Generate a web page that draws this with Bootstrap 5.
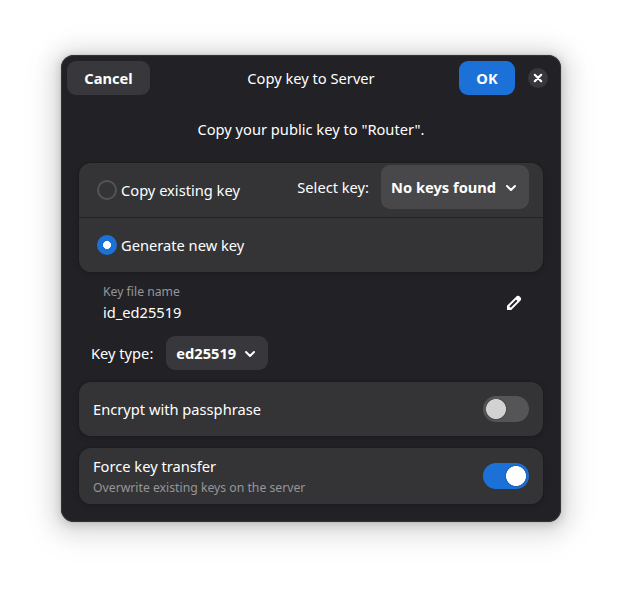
<!DOCTYPE html>
<html lang="en">
<head>
<meta charset="utf-8">
<meta name="viewport" content="width=device-width, initial-scale=1">
<title>Copy key to Server</title>
<link rel="stylesheet" href="https://cdn.jsdelivr.net/npm/bootstrap@5.3.0/dist/css/bootstrap.min.css">
<style>
body { font-family: "Noto Sans", sans-serif; font-size: 14.667px; line-height: 20px; color: #fff; background: #fff; height: 589px; overflow: hidden; padding: 55px 61px 0; }
.dialog { width: 500px; height: 467px; background: #222226; border-radius: 13px; box-shadow: inset 0 0 0 1px #333337, 0 0 0 1px rgba(0,0,0,.05), 0 2px 8px 2px rgba(0,0,0,.13), 0 3px 20px 10px rgba(0,0,0,.09), 0 6px 32px 16px rgba(0,0,0,.04); }
.titlebar { height: 47px; padding: 6px 13px 7px 6px; display: grid; grid-template-columns: 1fr auto 1fr; align-items: center; }
.heading { padding-left: 7px; }
.flat { border: 0; border-radius: 9px; color: #fff; font-weight: 700; font-size: 14.667px; line-height: 20px; padding: 0 10px; height: 34px; background: #38383c; }
.flat:hover { color: #fff; background: #424246; }
.flat svg { margin-top: 1px; }
.cancel { width: 83px; }
.ok, .ok:hover { width: 56px; background: #1c71d8; }
.closer { width: 20px; height: 20px; background: #38383c; margin-left: 13px; }
.content { padding: 17px 18px 0; }
.intro { height: 44px; }
.panel { background: #343436; border-radius: 12px; box-shadow: 0 0 0 1px rgba(0,0,6,.04), 0 1px 3px 1px rgba(0,0,6,.09), 0 2px 6px 2px rgba(0,0,6,.03); }
.line { height: 54px; padding: 0 14px; }
.choice { padding-left: 18px; }
.choice + .choice { border-top: 1px solid #222226; height: 55px; }
.dot.form-check-input { width: 20px; height: 20px; margin: 0; background-color: transparent; border: 2px solid #545456; box-shadow: none; }
.dot.form-check-input:checked { background-color: #1c71d8; border: 0; background-image: radial-gradient(circle, #fff 3.7px, transparent 4.3px); }
.select-label { padding-bottom: 6px; }
.keys, .keys:hover { height: 44px; width: 148px; background: #48484a; margin: 2px 0 8px 12px; }
.kind { width: 102px; margin-left: 13px; }
.dim { font-size: 12.22px; line-height: 18px; color: #969698; }
.entry { height: 64px; padding: 11px 18px 0 24px; }
.entry .dim { margin-bottom: 1px; }
.entry svg { margin-top: 12px; margin-right: 3px; }
.typerow { height: 34px; padding-left: 12px; margin-bottom: 12px; }
.toggle.form-check-input { width: 46px; height: 26px; margin: 0; border: 0; border-radius: 13px; box-shadow: none; background-color: #555557; background-size: auto; background-position: 3px 3px; background-repeat: no-repeat; background-image: radial-gradient(circle at 10px 10px, #d2d2d2 9.6px, rgba(0,0,0,.12) 10.3px, transparent 12px); }
.toggle.form-check-input:checked { background-color: #1c71d8; background-position: 0 0; background-image: radial-gradient(circle at 33px 13px, #fff 9.6px, rgba(0,0,0,.12) 10.3px, transparent 12px); }
.encrypt { margin-bottom: 12px; }
.transfer { height: 56px; padding: 0 14px; }
.transfer label { padding-top: 3px; }
.transfer .dim { line-height: 23px; }
</style>
<script src="https://cdn.jsdelivr.net/npm/bootstrap@5.3.0/dist/js/bootstrap.bundle.min.js" defer></script>
</head>
<body>
<main class="dialog">
  <header class="titlebar">
    <button class="btn flat cancel">Cancel</button>
    <div class="heading">Copy key to Server</div>
    <div class="d-flex align-items-center justify-content-end">
      <button class="btn flat ok">OK</button>
      <button class="btn closer rounded-circle p-0 border-0 d-flex align-items-center justify-content-center" aria-label="Close">
        <svg width="20" height="20" viewBox="0 0 20 20" fill="none" stroke="#fff" stroke-width="2.2" stroke-linecap="round"><path d="M6.8 6.8l6.4 6.4M13.2 6.8l-6.4 6.4"/></svg>
      </button>
    </div>
  </header>
  <div class="content">
    <div class="intro text-center">Copy your public key to "Router".</div>
    <section class="panel">
      <div class="line choice d-flex align-items-center">
        <input class="form-check-input dot" type="radio" name="source" id="existing">
        <label class="ms-1" for="existing">Copy existing key</label>
        <div class="ms-auto d-flex align-items-center">
          <span class="select-label">Select key:</span>
          <button class="btn flat keys d-flex align-items-center justify-content-between">No keys found
            <svg width="16" height="16" viewBox="0 0 16 16" fill="none" stroke="#fff" stroke-width="2" stroke-linecap="round" stroke-linejoin="round"><path d="M4 6l4 4 4-4"/></svg>
          </button>
        </div>
      </div>
      <div class="line choice d-flex align-items-center">
        <input class="form-check-input dot" type="radio" name="source" id="generate" checked>
        <label class="ms-1" for="generate">Generate new key</label>
      </div>
    </section>
    <div class="entry d-flex justify-content-between">
      <div><div class="dim">Key file name</div><div>id_ed25519</div></div>
      <svg width="16" height="16" viewBox="0 0 16 16" fill="none" stroke="#fff" stroke-width="2" stroke-linejoin="miter"><path d="M2 14v-2.8l8.6-8.6a1.9 1.9 0 0 1 2.8 2.8L4.8 14z"/><path fill="#fff" stroke="none" d="M9.2 3.7l1.5-1.5a2.2 2.2 0 0 1 3.1 3.1l-1.5 1.5zM1 11h2l2 2v2H1z"/></svg>
    </div>
    <div class="typerow d-flex align-items-center">
      <span>Key type:</span>
      <button class="btn flat kind d-flex align-items-center justify-content-between">ed25519
        <svg width="16" height="16" viewBox="0 0 16 16" fill="none" stroke="#fff" stroke-width="2" stroke-linecap="round" stroke-linejoin="round"><path d="M4 6l4 4 4-4"/></svg>
      </button>
    </div>
    <section class="panel line d-flex align-items-center justify-content-between encrypt">
      <label for="encrypt">Encrypt with passphrase</label>
      <input class="form-check-input toggle" type="checkbox" id="encrypt">
    </section>
    <section class="panel transfer d-flex align-items-center justify-content-between">
      <label for="force">Force key transfer<span class="dim d-block">Overwrite existing keys on the server</span></label>
      <input class="form-check-input toggle" type="checkbox" id="force" checked>
    </section>
  </div>
</main>
</body>
</html>
